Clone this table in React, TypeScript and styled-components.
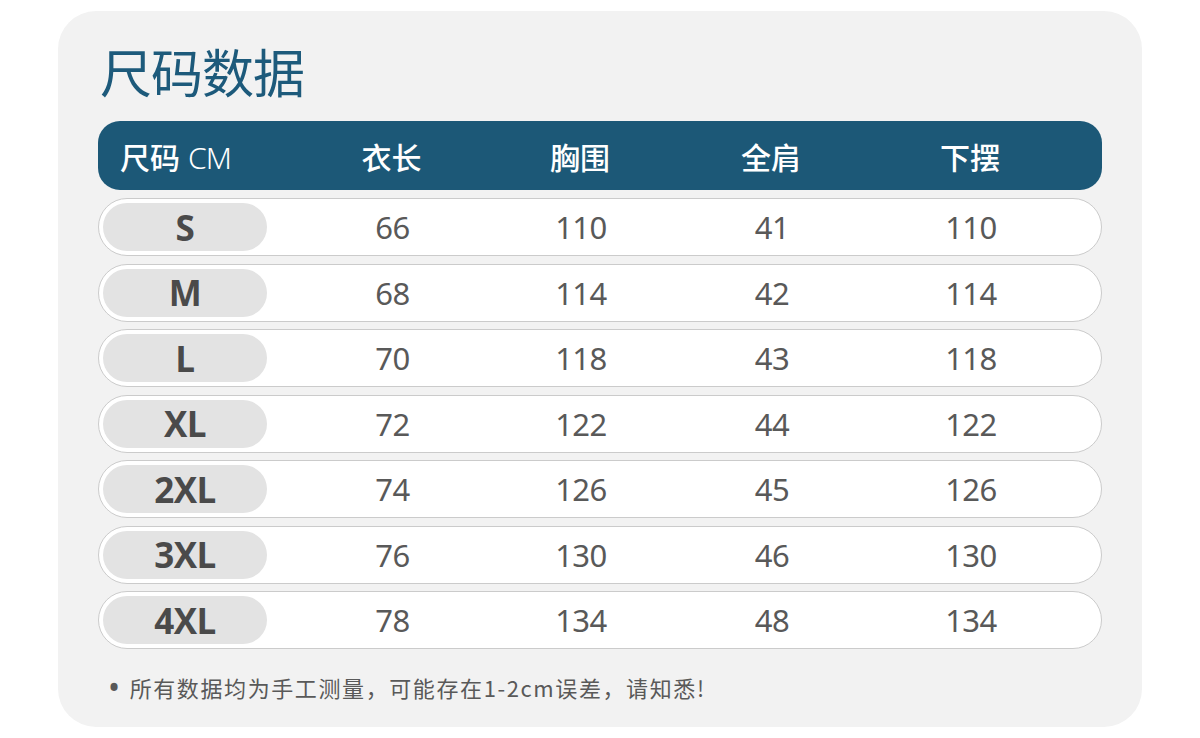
import styled, { createGlobalStyle } from 'styled-components';

const GlobalStyle = createGlobalStyle`
	body {
		margin: 0;
		background: #ffffff;
		font-family: 'Noto Sans', 'Noto Sans CJK SC', sans-serif;
	}
`;

const Page = styled.div`
	width: 1200px;
	height: 738px;
	padding: 11px 58px 0;
	box-sizing: border-box;
`;

const Card = styled.section`
	height: 716px;
	background: #f2f2f2;
	border-radius: 38px;
	padding: 30px 40px 0;
	box-sizing: border-box;
	display: flex;
	flex-direction: column;
`;

const Title = styled.h1`
	margin: 0 0 0 2px;
	font-size: 52px;
	line-height: 60px;
	font-weight: 400;
	color: #1d5a7b;
	font-family: 'Noto Sans CJK SC', sans-serif;
	letter-spacing: -1px;
`;

const columns = '197px 185px 192px 190px 208px';

const HeaderBar = styled.div`
	margin-top: 20px;
	height: 69px;
	background: #1c5877;
	border-radius: 22px;
	display: grid;
	grid-template-columns: ${columns};
	align-items: center;
	padding-left: 4px;
	color: #ffffff;
	font-size: 30px;
	font-weight: 500;
	font-family: 'Noto Sans CJK SC', sans-serif;
`;

const HeadCell = styled.div<{ $first?: boolean }>`
	text-align: ${(p) => (p.$first ? 'left' : 'center')};
	padding-left: ${(p) => (p.$first ? '18px' : '0')};
	white-space: nowrap;
`;

const Unit = styled.span`
	font-family: 'Noto Sans', sans-serif;
	font-weight: 300;
	margin-left: 8px;
	letter-spacing: -1px;
`;

const Rows = styled.div`
	margin-top: 8px;
	display: flex;
	flex-direction: column;
	gap: 7.5px;
`;

const Row = styled.div`
	height: 58px;
	box-sizing: border-box;
	background: #ffffff;
	border: 1px solid #cbcbcb;
	border-radius: 29px;
	display: grid;
	grid-template-columns: ${columns};
	align-items: center;
	padding-left: 4px;
`;

const SizePill = styled.div`
	width: 164px;
	height: 48px;
	border-radius: 24px;
	background: #e3e3e3;
	display: flex;
	align-items: center;
	justify-content: center;
	font-family: 'Open Sans', sans-serif;
	font-weight: 700;
	font-size: 35px;
	color: #4a4a4a;
	letter-spacing: -0.5px;
`;

const Value = styled.div`
	text-align: center;
	font-family: 'Noto Sans', sans-serif;
	font-size: 31px;
	color: #595959;
	letter-spacing: -0.5px;
`;

const Note = styled.p`
	margin: 22px 0 0 10px;
	font-size: 22px;
	color: #595959;
	font-family: 'Noto Sans CJK SC', sans-serif;
	letter-spacing: 1.6px;
	display: flex;
	align-items: center;
`;

const Bullet = styled.span`
	font-family: 'Noto Sans', sans-serif;
	font-size: 32px;
	line-height: 1;
	margin-right: 8px;
`;

const heads = ['衣长', '胸围', '全肩', '下摆'];

const data: [string, number, number, number, number][] = [
	['S', 66, 110, 41, 110],
	['M', 68, 114, 42, 114],
	['L', 70, 118, 43, 118],
	['XL', 72, 122, 44, 122],
	['2XL', 74, 126, 45, 126],
	['3XL', 76, 130, 46, 130],
	['4XL', 78, 134, 48, 134],
];

const App = () => {
	return (
		<Page>
			<GlobalStyle />
			<Card>
				<Title>尺码数据</Title>
				<HeaderBar>
					<HeadCell $first>
						尺码<Unit>CM</Unit>
					</HeadCell>
					{heads.map((h) => (
						<HeadCell key={h}>{h}</HeadCell>
					))}
				</HeaderBar>
				<Rows>
					{data.map(([size, ...vals]) => (
						<Row key={size}>
							<SizePill>{size}</SizePill>
							{vals.map((v, i) => (
								<Value key={i}>{v}</Value>
							))}
						</Row>
					))}
				</Rows>
				<Note>
					<Bullet>•</Bullet>所有数据均为手工测量，可能存在1-2cm误差，请知悉!
				</Note>
			</Card>
		</Page>
	);
};

export default App;
